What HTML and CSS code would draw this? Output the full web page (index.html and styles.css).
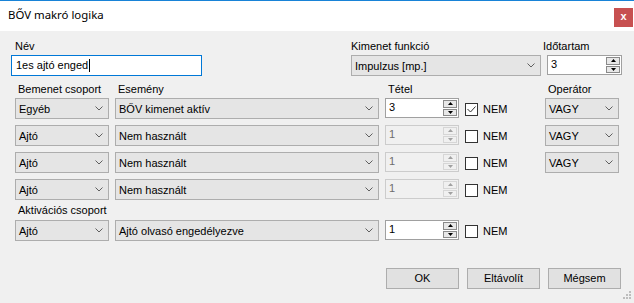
FILE: index.html
```html
<!DOCTYPE html>
<html lang="hu">
<head>
<meta charset="utf-8">
<title>BŐV makró logika</title>
<link rel="stylesheet" href="styles.css">
</head>
<body>
<div class="window">
  <div class="titlebar">
    <span class="title">BŐV makró logika</span>
    <span class="close">x</span>
  </div>
  <div class="content">
    <div class="toprow">
      <div class="field f-name">
        <div class="label">Név</div>
        <div class="textbox">1es ajtó enged<span class="caret"></span></div>
      </div>
      <div class="field f-func">
        <div class="label">Kimenet funkció</div>
        <div class="combo"><span>Impulzus [mp.]</span><svg class="chev" width="8" height="5" viewBox="0 0 8 5"><polyline points="0.5,0.5 4,4 7.5,0.5"/></svg></div>
      </div>
      <div class="field f-time">
        <div class="label">Időtartam</div>
        <div class="spin"><span class="val">3</span><span class="ud"><span class="btn"><svg width="5" height="3" viewBox="0 0 5 3"><path d="M0 3L2.5 0L5 3Z"/></svg></span><span class="btn"><svg width="5" height="3" viewBox="0 0 5 3"><path d="M0 0L2.5 3L5 0Z"/></svg></span></span></div>
      </div>
    </div>

    <div class="cols heads">
      <div class="label">Bemenet csoport</div>
      <div class="label">Esemény</div>
      <div class="label">Tétel</div>
      <div></div>
      <div class="label">Operátor</div>
    </div>

    <div class="rows">
      <div class="cols">
        <div class="combo"><span>Egyéb</span><svg class="chev" width="8" height="5" viewBox="0 0 8 5"><polyline points="0.5,0.5 4,4 7.5,0.5"/></svg></div>
        <div class="combo"><span>BŐV kimenet aktív</span><svg class="chev" width="8" height="5" viewBox="0 0 8 5"><polyline points="0.5,0.5 4,4 7.5,0.5"/></svg></div>
        <div class="spin"><span class="val">3</span><span class="ud"><span class="btn"><svg width="5" height="3" viewBox="0 0 5 3"><path d="M0 3L2.5 0L5 3Z"/></svg></span><span class="btn"><svg width="5" height="3" viewBox="0 0 5 3"><path d="M0 0L2.5 3L5 0Z"/></svg></span></span></div>
        <div class="chk"><span class="box"><svg width="11" height="11" viewBox="0 0 11 11"><polyline points="1.5,5 4.5,8 9.5,2.5"/></svg></span><span>NEM</span></div>
        <div class="combo"><span>VAGY</span><svg class="chev" width="8" height="5" viewBox="0 0 8 5"><polyline points="0.5,0.5 4,4 7.5,0.5"/></svg></div>
      </div>
      <div class="cols">
        <div class="combo"><span>Ajtó</span><svg class="chev" width="8" height="5" viewBox="0 0 8 5"><polyline points="0.5,0.5 4,4 7.5,0.5"/></svg></div>
        <div class="combo"><span>Nem használt</span><svg class="chev" width="8" height="5" viewBox="0 0 8 5"><polyline points="0.5,0.5 4,4 7.5,0.5"/></svg></div>
        <div class="spin disabled"><span class="val">1</span><span class="ud"><span class="btn"><svg width="5" height="3" viewBox="0 0 5 3"><path d="M0 3L2.5 0L5 3Z"/></svg></span><span class="btn"><svg width="5" height="3" viewBox="0 0 5 3"><path d="M0 0L2.5 3L5 0Z"/></svg></span></span></div>
        <div class="chk"><span class="box"></span><span>NEM</span></div>
        <div class="combo"><span>VAGY</span><svg class="chev" width="8" height="5" viewBox="0 0 8 5"><polyline points="0.5,0.5 4,4 7.5,0.5"/></svg></div>
      </div>
      <div class="cols">
        <div class="combo"><span>Ajtó</span><svg class="chev" width="8" height="5" viewBox="0 0 8 5"><polyline points="0.5,0.5 4,4 7.5,0.5"/></svg></div>
        <div class="combo"><span>Nem használt</span><svg class="chev" width="8" height="5" viewBox="0 0 8 5"><polyline points="0.5,0.5 4,4 7.5,0.5"/></svg></div>
        <div class="spin disabled"><span class="val">1</span><span class="ud"><span class="btn"><svg width="5" height="3" viewBox="0 0 5 3"><path d="M0 3L2.5 0L5 3Z"/></svg></span><span class="btn"><svg width="5" height="3" viewBox="0 0 5 3"><path d="M0 0L2.5 3L5 0Z"/></svg></span></span></div>
        <div class="chk"><span class="box"></span><span>NEM</span></div>
        <div class="combo"><span>VAGY</span><svg class="chev" width="8" height="5" viewBox="0 0 8 5"><polyline points="0.5,0.5 4,4 7.5,0.5"/></svg></div>
      </div>
      <div class="cols">
        <div class="combo"><span>Ajtó</span><svg class="chev" width="8" height="5" viewBox="0 0 8 5"><polyline points="0.5,0.5 4,4 7.5,0.5"/></svg></div>
        <div class="combo"><span>Nem használt</span><svg class="chev" width="8" height="5" viewBox="0 0 8 5"><polyline points="0.5,0.5 4,4 7.5,0.5"/></svg></div>
        <div class="spin disabled"><span class="val">1</span><span class="ud"><span class="btn"><svg width="5" height="3" viewBox="0 0 5 3"><path d="M0 3L2.5 0L5 3Z"/></svg></span><span class="btn"><svg width="5" height="3" viewBox="0 0 5 3"><path d="M0 0L2.5 3L5 0Z"/></svg></span></span></div>
        <div class="chk"><span class="box"></span><span>NEM</span></div>
        <div></div>
      </div>
    </div>

    <div class="label act">Aktivációs csoport</div>
    <div class="cols">
      <div class="combo"><span>Ajtó</span><svg class="chev" width="8" height="5" viewBox="0 0 8 5"><polyline points="0.5,0.5 4,4 7.5,0.5"/></svg></div>
      <div class="combo"><span>Ajtó olvasó engedélyezve</span><svg class="chev" width="8" height="5" viewBox="0 0 8 5"><polyline points="0.5,0.5 4,4 7.5,0.5"/></svg></div>
      <div class="spin"><span class="val">1</span><span class="ud"><span class="btn"><svg width="5" height="3" viewBox="0 0 5 3"><path d="M0 3L2.5 0L5 3Z"/></svg></span><span class="btn"><svg width="5" height="3" viewBox="0 0 5 3"><path d="M0 0L2.5 3L5 0Z"/></svg></span></span></div>
      <div class="chk"><span class="box"></span><span>NEM</span></div>
      <div></div>
    </div>

    <div class="buttons">
      <div class="button">OK</div>
      <div class="button">Eltávolít</div>
      <div class="button">Mégsem</div>
    </div>
  </div>
  <svg class="grip" width="9" height="9" viewBox="0 0 9 9">
    <rect x="6" y="0" width="2" height="2"/>
    <rect x="3" y="3" width="2" height="2"/><rect x="6" y="3" width="2" height="2"/>
    <rect x="0" y="6" width="2" height="2"/><rect x="3" y="6" width="2" height="2"/><rect x="6" y="6" width="2" height="2"/>
  </svg>
</div>
</body>
</html>
```
FILE: styles.css
```css
* { box-sizing: border-box; }
html, body { margin: 0; padding: 0; }
body {
  width: 634px;
  height: 303px;
  overflow: hidden;
  background: #f0f0f0;
  font-family: "Liberation Sans", Arial, sans-serif;
  font-size: 11px;
  color: #000;
}
.window {
  position: relative;
  width: 634px;
  height: 303px;
  background: #f0f0f0;
  overflow: hidden;
}
.titlebar {
  height: 31px;
  background: #fff;
  border-top: 1px solid #1883d7;
  display: flex;
  justify-content: space-between;
  align-items: flex-start;
}
.title {
  font-family: "Noto Sans", "Open Sans", sans-serif;
  font-size: 11.4px;
  line-height: 16px;
  margin: 6px 0 0 8px;
  color: #000;
}
.close {
  width: 19px;
  height: 19px;
  margin: 7px 1px 0 0;
  background: #c75050;
  color: #fff;
  font-weight: bold;
  font-size: 11px;
  line-height: 17px;
  text-align: center;
}
.content {
  padding-top: 9px;
}
.label {
  height: 13px;
  line-height: 13px;
  margin-bottom: 2px;
  white-space: nowrap;
}
.toprow {
  display: flex;
  align-items: flex-start;
}
.f-name { margin-left: 11px; width: 191px; }
.f-name .label { padding-left: 4px; }
.f-func { margin-left: 149px; width: 190px; }
.f-func .combo { margin-top: 1px; }
.f-time { margin-left: 2px; width: 79px; }
.f-time .spin { margin-left: 4px; width: 75px; margin-top: 1px; }

.textbox {
  height: 21px;
  background: #fff;
  border: 1px solid #0078d7;
  padding-left: 4px;
  line-height: 19px;
  display: flex;
  align-items: center;
  white-space: nowrap;
}
.caret {
  display: inline-block;
  width: 1px;
  height: 13px;
  background: #000;
  margin-left: 1px;
}

.cols {
  display: grid;
  grid-template-columns: 94px 264px 74px 74px 74px;
  column-gap: 6px;
  margin-left: 15px;
  align-items: start;
}
.heads { margin-top: 7px; }
.heads .label { padding-left: 3px; }
.rows {
  display: flex;
  flex-direction: column;
  gap: 6px;
}
.label.act {
  margin: 4px 0 3px 15px;
  padding-left: 3px;
}

.combo {
  height: 21px;
  background: #e5e5e5;
  border: 1px solid #adadad;
  display: flex;
  align-items: center;
  justify-content: space-between;
  padding: 0 5px 0 3px;
  white-space: nowrap;
}
.chev polyline {
  fill: none;
  stroke: #5f5f5f;
  stroke-width: 1;
}

.spin {
  height: 20px;
  background: #fff;
  border: 1px solid #a0a0a0;
  display: flex;
  align-items: stretch;
}
.spin .val {
  flex: 1;
  padding-left: 3px;
  line-height: 17px;
}
.spin .ud {
  width: 15px;
  display: flex;
  flex-direction: column;
  padding: 1px 1px 1px 0;
  gap: 1px;
  background: #fff;
}
.spin .btn {
  flex: 1;
  background: #e8e8e8;
  border: 1px solid #8a8a8a;
  display: flex;
  align-items: center;
  justify-content: center;
}
.spin .btn svg path { fill: #000; }
.spin.disabled {
  background: #f0f0f0;
  border-color: #cccccc;
  color: #6d6d6d;
}
.spin.disabled .ud { background: #f0f0f0; }
.spin.disabled .btn {
  background: #f0f0f0;
  border-color: #d6d6d6;
}
.spin.disabled .btn svg path { fill: #a0a0a0; }

.chk {
  height: 21px;
  display: flex;
  align-items: center;
  gap: 5px;
}
.chk .box {
  width: 13px;
  height: 13px;
  background: #fff;
  border: 1px solid #333;
  display: flex;
  align-items: center;
  justify-content: center;
  margin-top: 1px;
}
.chk .box polyline {
  fill: none;
  stroke: #333;
  stroke-width: 1;
}

.buttons {
  display: flex;
  justify-content: flex-end;
  gap: 8px;
  margin-top: 27px;
  padding-right: 13px;
}
.button {
  width: 73px;
  height: 21px;
  background: #e1e1e1;
  border: 1px solid #adadad;
  text-align: center;
  line-height: 19px;
}
.grip {
  position: absolute;
  right: 2px;
  bottom: 3px;
}
.grip rect { fill: #bdbdbd; }
```
